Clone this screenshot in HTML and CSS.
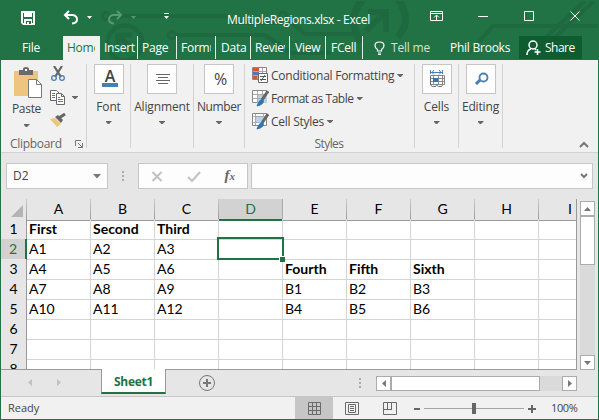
FILE: index.html
```html
<!DOCTYPE html>
<html lang="en">
<head>
<meta charset="utf-8">
<title>MultipleRegions.xlsx - Excel</title>
<link rel="stylesheet" href="styles.css">
</head>
<body>
<div class="window">
  <header class="header">
    <svg class="circuit" width="597" height="59" viewBox="1 1 597 59" fill="none" stroke="#1e693f" stroke-width="4">
      <circle cx="106" cy="16" r="3.500" stroke-width="3"/><path d="M110 16H226l8 7h48"/>
      <circle cx="172" cy="35" r="3.500" stroke-width="3"/><path d="M176 35H265l26 18h40"/>
      <circle cx="283" cy="16" r="4" stroke-width="3"/><path d="M287 19l18 15h48"/>
      <circle cx="125" cy="43" r="17.500" stroke-width="4.500"/><path d="M134 51L119 36M118 50V35H132" stroke-width="5"/>
      <path d="M363 0Q345 18 361 42" stroke-width="7"/><path d="M366 31L384 13M368 12H386V32" stroke-width="6"/><path d="M398 0Q413 20 398 37" stroke-width="7"/>
      <path d="M470 52L493 26H598M546 37L585 1M555 37L594 1"/>
    </svg>
    <div class="titlebar">
      <div class="quick">
        <svg width="160" height="20" viewBox="15 6 160 20" fill="none" stroke="#fff">
          <path d="M21 11h14v14H23l-2-2zM23 13v10h1v-4h8v4h1V13h-1v4h-8v-4zM26 21v3h1v-2h2v2h2v-3z" fill="#fff" fill-rule="evenodd" stroke="none"/>
          <path d="M69 11l-4 4 4 4M65 15h8q4 1 4 4.500t-5 4" stroke-width="2"/><path d="M87 16h5l-2.500 3z" fill="#fff" stroke="none"/>
          <g stroke="#5b9775"><path d="M117 11l4 4-4 4M121 15h-8q-4 1-4 4.500t5 4" stroke-width="2"/><path d="M131 16h5l-2.500 3z" fill="#5b9775" stroke="none"/></g>
          <path d="M164 13.500h5"/><path d="M164 16h5l-2.500 3z" fill="#fff" stroke="none"/>
        </svg>
      </div>
      <div class="title">MultipleRegions.xlsx - Excel</div>
      <svg class="controls" width="160" height="20" viewBox="425 6 160 20" fill="none" stroke="#fff">
        <path d="M430.500 11.500h12v9h-12zM431 13.500h11M436.500 20v-5M434 17.500l2.500-2.500 2.500 2.500M478 16.500h10M524.500 11.500h9v9h-9zM570.500 11.500l9 9M579.500 11.500l-9 9"/>
      </svg>
    </div>
    <nav class="tabs">
      <div class="file">File</div>
      <div class="tab active"><span>Home</span></div>
      <div class="tab insert"><span>Insert</span></div>
      <div class="tab page"><span>Page</span></div>
      <div class="tab formulas"><span>Formulas</span></div>
      <div class="tab data"><span>Data</span></div>
      <div class="tab review"><span>Review</span></div>
      <div class="tab view"><span>View</span></div>
      <div class="tab fcell"><span>FCell</span></div>
      <div class="tell"><svg width="12" height="15" viewBox="0 0 12 15" fill="none" stroke="#fff" stroke-width="1.200"><path d="M3.500 10V8.500Q1 7 1 4.500 1 1 5.500 1T10 4.500Q10 7 7.500 8.500V10zM4 12h3M4 13.500h3"/></svg><span>Tell me</span></div>
      <div class="user">Phil Brooks</div>
      <div class="share"><svg width="15" height="16" viewBox="0 0 15 16" fill="none" stroke="#fff" stroke-width="1.500"><circle cx="7" cy="5" r="4"/><path d="M1 15q0-5 4-6M9 9l1 1M11.500 9v6M8.500 12h6"/></svg><span>Share</span></div>
    </nav>
  </header>

  <section class="ribbon">
    <div class="group clipboard">
      <div class="clip-body">
        <div class="paste">
          <svg width="30" height="32" viewBox="13 67 30 32"><path d="M14 71h24v25H14z" fill="#edc57e"/><path d="M19 75v-5h4v-1q0-2 3-2t3 2v1h4v5z" fill="#6a6a6a"/><path d="M25 69h2v2h-2z" fill="#fff"/><path d="M28.500 79.500h8l5 5v13h-13z" fill="#fff" stroke="#777"/><path d="M36.500 79.500v5h5" fill="none" stroke="#777"/></svg>
          <span class="label">Paste</span><i class="arrow"></i>
        </div>
        <div class="tools">
          <svg width="16" height="16" viewBox="50 66 16 16" fill="none"><path d="M54 66l7 11M62 66l-7 11" stroke="#666" stroke-width="2.200"/><circle cx="54" cy="78" r="2.300" stroke="#477eb7" stroke-width="1.300"/><circle cx="62" cy="78" r="2.300" stroke="#477eb7" stroke-width="1.300"/></svg>
          <div class="copy"><svg width="16" height="15" viewBox="50 90 16 15" stroke="#6a6a6a"><path d="M50.500 90.500h6l3 3v7h-9z" fill="#fff"/><path d="M56.500 93.500h5l3 3v8h-8z" fill="#fff"/><path d="M61.500 93.500v3h3" fill="none"/><path d="M52 93.500h3M52 95.500h3M52 97.500h3M58 97.500h2M58 99.500h5M58 101.500h5" stroke="#477eb7"/></svg><i class="arrow"></i></div>
          <svg width="17" height="15" viewBox="50 113 17 15"><path d="M50 119l5-1 6 6-4 3z" fill="#edc57e"/><path d="M55 117l3-2 5 5-2 3z" fill="#666"/><path d="M59 118l6-4" stroke="#666" stroke-width="3"/></svg>
        </div>
      </div>
      <div class="caption"><span>Clipboard</span><svg width="8" height="8" fill="none" stroke="#777"><path d="M.5 6V.500H6M3 3l4 4M7.500 3v4.500H3"/></svg></div>
    </div>
    <div class="group font"><div class="box"><svg width="28" height="28"><text x="15" y="17" text-anchor="middle" class="icon-a">A</text><path d="M7 18h16v4H7z" fill="#477eb7"/></svg></div><span class="label">Font</span><i class="arrow"></i></div>
    <div class="group alignment"><div class="box"><svg width="28" height="28" stroke="#666"><path d="M8 9.500h14M10 12.500h10M8 15.500h14M10 18.500h10"/></svg></div><span class="label">Alignment</span><i class="arrow"></i></div>
    <div class="group number"><div class="box percent">%</div><span class="label">Number</span><i class="arrow"></i></div>
    <div class="group style-group">
      <div class="style-row"><svg width="17" height="17" viewBox="252 66 17 17"><path d="M252.500 66.500h14v12h-14z" fill="#fff" stroke="#888"/><path d="M253 70.500h13M253 74.500h13M257.500 67v11M262.500 67v11" stroke="#aaa"/><path d="M253 67h6v3h-6zM253 75h4v3h-4z" fill="#d65532"/><path d="M253 71h6v3h-6z" fill="#477eb7"/><path d="M258.500 72.500h9v9h-9z" fill="#fff" stroke="#666"/><path d="M260 75.500h6M260 78.500h6M265 74l-4 6" stroke="#555"/></svg><span class="conditional">Conditional Formatting</span><i class="arrow"></i></div>
      <div class="style-row"><svg width="17" height="17" viewBox="252 89 17 17"><path d="M252.500 89.500h14v12h-14z" fill="#fff" stroke="#888"/><path d="M257 93h10v9h-10z" fill="#bad2e8"/><path d="M253 93.500h13M253 97.500h13M257.500 90v12M262.500 90v12" stroke="#aaa"/><path d="M268 90l-6 9" stroke="#666" stroke-width="3"/><path d="M257 105q3-8 6-6 2 4-6 6" fill="#2f76b5" stroke="#2f76b5"/></svg><span class="table-label">Format as Table</span><i class="arrow"></i></div>
      <div class="style-row"><svg width="17" height="17" viewBox="252 112 17 17"><path d="M252.500 112.500h14v12h-14z" fill="#fff" stroke="#888"/><path d="M256 116h8v6h-8z" fill="#bad2e8"/><path d="M253 115.500h13M253 121.500h6M255.500 113v11M263.500 113v3" stroke="#aaa"/><path d="M268 113l-6 9" stroke="#666" stroke-width="3"/><path d="M257 128q3-8 6-6 2 4-6 6" fill="#2f76b5" stroke="#2f76b5"/></svg><span>Cell Styles</span><i class="arrow"></i></div>
      <div class="styles-caption">Styles</div>
    </div>
    <div class="group cells"><div class="box"><svg width="28" height="28" viewBox="422 65 28 28" fill="none" stroke="#6a6a6a"><path d="M429.500 70v4M441.500 70v4M430 72.500h11M433 70l-2 2.500 2 2M438 70l2 2.500-2 2" stroke="#477eb7"/><path d="M429.500 75.500h14v9h-14zM430 78.500h13M430 81.500h13M432.500 76v8M437.500 76v8M441.500 76v8" stroke="#888"/><path d="M432 78h5v4h-5z" fill="#2f76b5" stroke="none"/><path d="M429.500 76v9l2 1.500h3l1-1.500 2 1.500h3l1-1.500"/></svg></div><span class="label">Cells</span><i class="arrow"></i></div>
    <div class="group cells"><div class="box"><svg width="28" height="28" fill="none" stroke="#477eb7"><circle cx="16.500" cy="12.500" r="4" stroke-width="1.800"/><path d="M13 15l-4 4" stroke-width="3"/></svg></div><span class="label">Editing</span><i class="arrow"></i></div>
    <svg class="collapse" width="10" height="7" fill="none" stroke="#777" stroke-width="2"><path d="M1 6l4-4 4 4"/></svg>
  </section>

  <section class="formula">
    <div class="namebox"><span>D2</span><svg width="8" height="5"><path d="M0 0h8L4 4.500z" fill="#777"/></svg></div>
    <svg class="dots" width="2" height="10" fill="#aaa"><path d="M0 0h2v2H0zM0 4h2v2H0zM0 8h2v2H0z"/></svg>
    <div class="fx"><svg width="108" height="24" fill="none" stroke="#c1c1c1" stroke-width="2"><path d="M13.500 8l9 9M22.500 8l-9 9M49 13l4 4 8-9"/></svg><span>f<small>x</small></span></div>
    <div class="input"><svg width="8" height="6" fill="none" stroke="#777" stroke-width="2"><path d="M1 1l3 3 3-3"/></svg></div>
  </section>

  <section class="sheet">
    <div class="grid">
      <div class="row head"><div class="corner"><svg width="12" height="12"><path d="M12 0v12H0z" fill="#b4b4b4"/></svg></div><div>A</div><div>B</div><div>C</div><div class="selected">D</div><div>E</div><div>F</div><div>G</div><div>H</div><div class="last">I</div></div>
      <div class="row bold"><b>1</b><div>First</div><div>Second</div><div>Third</div><div></div><div></div><div></div><div></div><div></div><div></div></div>
      <div class="row"><b class="selected">2</b><div>A1</div><div>A2</div><div>A3</div><div class="cursor"></div><div></div><div></div><div></div><div></div><div></div></div>
      <div class="row"><b>3</b><div>A4</div><div>A5</div><div>A6</div><div></div><div class="strong">Fourth</div><div class="strong">Fifth</div><div class="strong">Sixth</div><div></div><div></div></div>
      <div class="row"><b>4</b><div>A7</div><div>A8</div><div>A9</div><div></div><div>B1</div><div>B2</div><div>B3</div><div></div><div></div></div>
      <div class="row"><b>5</b><div>A10</div><div>A11</div><div>A12</div><div></div><div>B4</div><div>B5</div><div>B6</div><div></div><div></div></div>
      <div class="row"><b>6</b><div></div><div></div><div></div><div></div><div></div><div></div><div></div><div></div><div></div></div>
      <div class="row"><b>7</b><div></div><div></div><div></div><div></div><div></div><div></div><div></div><div></div><div></div></div>
      <div class="row"><b>8</b><div></div><div></div><div></div><div></div><div></div><div></div><div></div><div></div><div></div></div>
    </div>
    <div class="vscroll"><div class="sbtn"><svg width="7" height="4"><path d="M0 4h7L3.500 0z" fill="#777"/></svg></div><div class="thumb"></div><div class="sbtn down"><svg width="7" height="4"><path d="M0 0h7L3.500 4z" fill="#777"/></svg></div></div>
  </section>

  <section class="sheetbar">
    <div class="sheetnav"><svg width="34" height="7" fill="#c1c1c1"><path d="M4 0v7L0 3.500zM29 0v7l4-3.500z"/></svg></div>
    <div class="sheettab">Sheet1</div>
    <svg class="add" width="17" height="17" fill="none" stroke="#777"><circle cx="8" cy="8" r="7.500"/><path d="M8 4v8M4 8h8" stroke-width="2"/></svg>
    <svg class="grip" width="2" height="10" fill="#aaa"><path d="M0 0h2v2H0zM0 4h2v2H0zM0 8h2v2H0z"/></svg>
    <div class="hscroll"><div class="sbtn"><svg width="4" height="7"><path d="M4 0v7L0 3.500z" fill="#777"/></svg></div><div class="thumb"></div><div class="sbtn right"><svg width="4" height="7"><path d="M0 0v7l4-3.500z" fill="#777"/></svg></div></div>
  </section>

  <footer class="status">
    <span class="ready">Ready</span>
    <div class="viewbtn on"><svg width="13" height="13" fill="none" stroke="#6a6a6a"><path d="M.5.500h12v12H.5zM4.500 0v13M8.500 0v13M0 4.500h13M0 8.500h13"/></svg></div>
    <div class="viewbtn"><svg width="14" height="13" fill="none" stroke="#6a6a6a"><path d="M.5.500h13v12H.5zM3.500 2.500h7v8h-7zM5 4.500h4M5 6.500h4M5 8.500h4"/></svg></div>
    <div class="viewbtn"><svg width="14" height="13" fill="none" stroke="#6a6a6a"><path d="M.5.500h13v12H.5zM4.500 0v7.500M8.500 0v7.500M0 7.500h9"/></svg></div>
    <svg class="slider" width="124" height="13" fill="none" stroke="#666"><path d="M0 7h6" stroke-width="2"/><path d="M10 6.500h100" stroke="#a5a5a5"/><path d="M58 1h4v11h-4z" fill="#666" stroke="none"/><path d="M114 7h8M118 3v8" stroke-width="2"/></svg>
    <span class="zoom">100%</span>
  </footer>
</div>
</body>
</html>
```
FILE: styles.css
```css
*, *::before, *::after { box-sizing: border-box; }
body { margin: 0; font-family: "Open Sans", "Noto Sans", sans-serif; font-size: 12px; line-height: 16px; color: #444; }
svg { display: block; flex: none; }
.window { width: 599px; height: 420px; border: 1px solid #217346; background: #e6e6e6; overflow: hidden; }
.header { position: relative; height: 59px; background: #217346; color: #fff; letter-spacing: -.25px; }
.circuit { position: absolute; left: 0; top: 0; }
.titlebar, .tabs { position: relative; display: flex; }
.titlebar { height: 35px; padding-top: 5px; }
.quick { width: 226px; padding-left: 14px; }
.title { width: 198px; padding-top: 6px; letter-spacing: -.35px; white-space: nowrap; }
.tabs { height: 24px; line-height: 24px; white-space: nowrap; }
.file { width: 61px; padding-left: 21px; }
.tab { height: 23px; padding-left: 4px; border-right: 1px solid #e3eee7; }
.tab span { display: block; overflow: hidden; }
.tab.active { width: 38px; height: 24px; background: #f1f1f1; color: #217346; border-left: 1px solid #217346; border-right: 1px solid #f1f1f1; }
.active span { width: 28px; }
.insert { width: 38px; }
.page { width: 39px; }
.formulas { width: 39px; }
.formulas span { width: 30px; }
.data { width: 35px; padding-left: 5px; }
.review { width: 39px; }
.review span { width: 30px; }
.view { width: 36px; padding-left: 5px; }
.fcell { width: 37px; padding-left: 5px; }
.tell { width: 87px; display: flex; align-items: center; gap: 5px; padding-left: 11px; color: #d3e3da; letter-spacing: -.2px; }
.user { width: 69px; }
.share { width: 63px; height: 23px; background: #0e5c2f; display: flex; align-items: center; gap: 4px; padding-left: 7px; letter-spacing: -.5px; }

.ribbon { display: flex; height: 93px; padding-top: 4px; background: #f1f1f1; border-bottom: 1px solid #d2d2d2; }
.group { height: 84px; border-right: 1px solid #d2d2d2; display: flex; flex-direction: column; align-items: center; white-space: nowrap; }
.clipboard { width: 86px; align-items: stretch; letter-spacing: -.3px; }
.clip-body { display: flex; flex: none; height: 72px; }
.paste { display: flex; flex-direction: column; align-items: center; width: 49px; padding: 3px 0 0 2px; }
.paste svg { margin-bottom: 2px; margin-left: 2px; }
.paste .arrow { margin-top: 7px; }
.tools { display: flex; flex-direction: column; padding-top: 2px; gap: 8px; }
.copy { display: flex; align-items: center; gap: 6px; }
.caption { display: flex; flex: none; align-items: center; gap: 13px; padding-left: 9px; color: #666; }
.arrow { flex: none; width: 6px; height: 3px; background: #666; clip-path: polygon(0 0, 100% 0, 100% 20%, 60% 100%, 40% 100%, 0 20%); }
.font, .cells { width: 44px; }
.alignment { width: 63px; }
.number { width: 51px; }
.box { flex: none; width: 30px; height: 30px; background: #fdfdfd; border: 1px solid #c6c6c6; }
.percent { font-size: 16px; line-height: 29px; text-align: center; padding-left: 2px; letter-spacing: -1px; }
.icon-a { font-size: 16px; font-weight: 600; fill: #444; }
.group > .label { margin: 5px 0 6px; letter-spacing: -.15px; }
.number > .label { letter-spacing: -.4px; }
.style-group { width: 170px; align-items: stretch; padding-left: 7px; }
.style-row { display: flex; flex: none; align-items: center; height: 23px; gap: 2px; letter-spacing: -.25px; }
.table-label { letter-spacing: -.45px; }
.style-row .arrow { margin-left: 1px; }
.styles-caption { flex: none; text-align: center; margin-top: 3px; color: #666; padding-right: 8px; letter-spacing: -.6px; }
.collapse { margin: 77px 0 0 76px; }

.formula { display: flex; height: 46px; padding: 10px 5px 0 5px; }
.namebox, .fx, .input { height: 26px; background: #fdfdfd; border: 1px solid #c6c6c6; display: flex; align-items: center; }
.namebox { width: 102px; justify-content: space-between; padding: 0 6px; }
.dots { margin: 8px 14px 0 14px; }
.fx { width: 110px; position: relative; }
.fx span { position: absolute; right: 12px; top: 3px; font: italic bold 15px/16px "Liberation Serif", serif; color: #666; }
.fx small { font-size: 11px; }
.input { margin-left: 3px; flex: 1; justify-content: flex-end; padding-right: 4px; }

.sheet { display: flex; height: 171px; }
.grid { width: 576px; height: 171px; overflow: hidden; border-right: 1px solid #999; border-bottom: 1px solid #999; background: #fff; color: #000; font-family: Lato, "Open Sans", sans-serif; font-size: 14px; }
.row { display: grid; grid-template-columns: 26px repeat(8, 64px) 37px; height: 20px; line-height: 20px; }
.row > div { border-right: 1px solid #d4d4d4; border-bottom: 1px solid #d4d4d4; padding-left: 2px; }
.row > b { font-weight: 400; text-align: center; background: #e6e6e6; border-right: 1px solid #999; border-bottom: 1px solid #c0c0c0; }
.row > b.selected { background: #d2d2d2; color: #217346; border-right: 2px solid #217346; }
.bold, .strong { font-weight: 700; }
.row > :last-child { border-right: 0; }
.row.head > div { background: #e6e6e6; text-align: center; padding: 0; border-bottom-color: #999; border-right: 1px solid; border-image: linear-gradient(#ccc, #999) 1; }
.row.head > .selected { background: #d2d2d2; color: #217346; border-bottom: 2px solid #217346; border-image: none; border-right-color: #aaa; }
.row.head > .corner { display: flex; align-items: flex-end; justify-content: flex-end; padding: 0 3px 3px 0; }
.row.head > .last { border-right: 0; text-align: right; padding-right: 4px; }
.cursor { position: relative; }
.cursor::before { content: ""; position: absolute; left: -2px; top: -2px; width: 67px; height: 23px; border: 2px solid #217346; }
.cursor::after { content: ""; position: absolute; right: -3px; bottom: -3px; width: 6px; height: 6px; background: #217346; border: solid #fff; border-width: 1px 0 0 1px; }
.vscroll { width: 15px; height: 169px; margin: 2px 0 0 3px; background: #dadada; display: flex; flex-direction: column; }
.sbtn, .thumb { background: #fff; border: 1px solid #ababab; }
.sbtn { flex: none; width: 15px; height: 15px; display: flex; align-items: center; justify-content: center; }
.vscroll .thumb { height: 49px; }
.vscroll .down { margin-top: auto; }

.sheetbar { display: flex; height: 27px; border-bottom: 1px solid #c6c6c6; }
.sheetnav { width: 100px; padding: 9px 0 0 27px; }
.sheettab { width: 65px; height: 25px; margin-top: -1px; position: relative; background: #fff; border: solid #999; border-width: 0 1px; border-bottom: 2px solid #217346; color: #217346; font-weight: 700; text-align: center; line-height: 26px; letter-spacing: -.3px; }
.add { margin: 5px 0 0 33px; }
.grip { margin: 8px 0 0 143px; }
.hscroll { display: flex; width: 201px; height: 15px; margin: 6px 0 0 15px; background: #dadada; }
.hscroll .thumb { width: 149px; }
.hscroll .right { margin-left: auto; }

.status { display: flex; height: 22px; background: #f1f1f1; align-items: center; font-size: 11px; }
.ready { width: 294px; padding-left: 7px; }
.viewbtn { width: 38px; height: 22px; display: flex; align-items: center; justify-content: center; }
.on { background: #c6c6c6; }
.slider { margin-left: 5px; }
.zoom { margin-left: 13px; letter-spacing: -.4px; }
```
